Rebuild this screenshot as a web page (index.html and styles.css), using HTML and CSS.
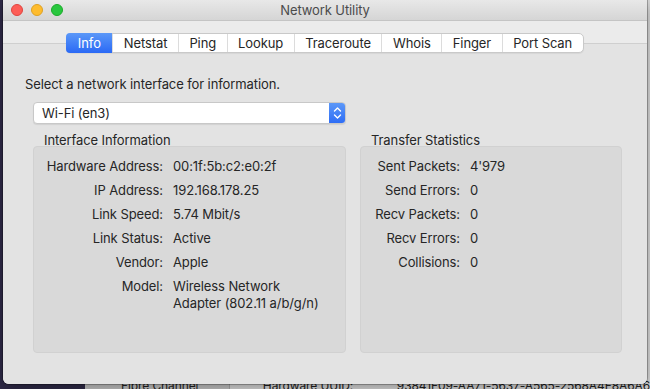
FILE: index.html
```html
<!DOCTYPE html>
<html lang="en">
<head>
	<meta charset="UTF-8">
	<title>Network Utility</title>
	<link rel="stylesheet" href="styles.css">
</head>
<body>
<div class="desk">
	<!-- window behind -->
	<div class="backwin">
		<div class="bw-side"><span>Fibre Channel</span></div>
		<div class="bw-main">
			<span class="bw-key">Hardware UUID:</span>
			<span class="bw-val">93841F09-AA71-5637-A565-2568A4F8A6A6</span>
		</div>
	</div>

	<div class="win">
		<div class="titlebar">
			<div class="lights">
				<span class="light red"></span>
				<span class="light yellow"></span>
				<span class="light green"></span>
			</div>
			<div class="title">Network Utility</div>
		</div>

		<div class="tabstrip">
			<div class="tabs">
				<span class="tab on">Info</span>
				<span class="tab">Netstat</span>
				<span class="tab">Ping</span>
				<span class="tab">Lookup</span>
				<span class="tab">Traceroute</span>
				<span class="tab">Whois</span>
				<span class="tab">Finger</span>
				<span class="tab">Port Scan</span>
			</div>
		</div>

		<div class="tabbox">
			<p class="hint">Select a network interface for information.</p>
			<div class="popup">
				<span class="popup-text">Wi-Fi (en3)</span>
				<span class="stepper">
					<svg width="9" height="14" viewBox="0 0 9 14">
						<path d="M1.5 5 L4.5 2 L7.5 5" fill="none" stroke="#fff" stroke-width="1.4" stroke-linecap="round" stroke-linejoin="round"/>
						<path d="M1.5 9 L4.5 12 L7.5 9" fill="none" stroke="#fff" stroke-width="1.4" stroke-linecap="round" stroke-linejoin="round"/>
					</svg>
				</span>
			</div>

			<div class="groups">
				<section class="group g-info">
					<h2>Interface Information</h2>
					<div class="box">
						<div class="rows rows-info">
							<span class="k">Hardware Address:</span><span class="v">00:1f:5b:c2:e0:2f</span>
							<span class="k">IP Address:</span><span class="v">192.168.178.25</span>
							<span class="k">Link Speed:</span><span class="v">5.74 Mbit/s</span>
							<span class="k">Link Status:</span><span class="v">Active</span>
							<span class="k">Vendor:</span><span class="v">Apple</span>
							<span class="k">Model:</span><span class="v">Wireless Network<br>Adapter (802.11 a/b/g/n)</span>
						</div>
					</div>
				</section>
				<section class="group g-stats">
					<h2>Transfer Statistics</h2>
					<div class="box">
						<div class="rows rows-stats">
							<span class="k">Sent Packets:</span><span class="v">4'979</span>
							<span class="k">Send Errors:</span><span class="v">0</span>
							<span class="k">Recv Packets:</span><span class="v">0</span>
							<span class="k">Recv Errors:</span><span class="v">0</span>
							<span class="k">Collisions:</span><span class="v">0</span>
						</div>
					</div>
				</section>
			</div>
		</div>
	</div>
</div>
</body>
</html>
```

FILE: styles.css
```css
*{margin:0;padding:0;box-sizing:border-box;}
html,body{width:650px;height:389px;overflow:hidden;}
body{font-family:"Inter","Liberation Sans",sans-serif;font-size:13px;letter-spacing:-0.1px;color:#262626;background:#2f2a48;}

.desk{position:relative;width:650px;height:389px;overflow:hidden;}

/* window behind */
.backwin{position:absolute;left:85px;top:0;right:0;bottom:0;display:flex;background:#d9d9d9;}
.bw-side{width:165px;background:#c3c3c3;border-right:1px solid #a9a9a9;padding:378px 0 0 36px;font-size:12px;color:#222;}
.bw-main{flex:1;padding:378px 0 0 33px;font-size:12px;color:#222;display:flex;white-space:nowrap;}
.bw-key{width:134px;}

/* main window */
.win{position:absolute;left:3px;top:0;width:644px;height:384px;background:#e3e3e3;border-radius:0 0 6px 6px;box-shadow:0 0 0 1px rgba(0,0,0,.25),0 4px 14px rgba(0,0,0,.35);overflow:hidden;display:flex;flex-direction:column;}

.titlebar{height:21px;background:linear-gradient(#e8e8e8,#d5d5d5);border-bottom:1px solid #c4c4c4;display:flex;align-items:center;position:relative;}
.lights{display:flex;gap:8px;padding-left:8px;}
.light{width:12px;height:12px;border-radius:50%;}
.red{background:#fd5d56;border:1px solid #e0443e;}
.yellow{background:#febc2e;border:1px solid #dea123;}
.green{background:#29c73f;border:1px solid #1aab29;}
.title{position:absolute;left:0;right:0;text-align:center;color:#4b4b4b;line-height:21px;}

.tabstrip{background:#ebebeb;padding-top:12px;height:23px;border-bottom:1px solid #cfcfcf;display:flex;justify-content:center;}
.tabs{display:flex;height:20px;background:#fff;border:1px solid #c9c9c9;border-radius:5px;box-shadow:0 1px 1px rgba(0,0,0,.06);position:relative;z-index:1;}
.tab{line-height:18px;padding:0 10.5px;color:#262626;border-left:1px solid #dcdcdc;white-space:nowrap;}
.tab:first-child{border-left:none;}
.tab.on{background:linear-gradient(#5b98f8,#2a69f5);color:#fff;border-radius:4px 0 0 4px;margin:-1px 0 -1px -1px;line-height:20px;padding:0 11.5px;}

.tabbox{flex:1;padding:32px 0 0 22px;background:#e3e3e3;}
.hint{line-height:16px;}

.popup{margin:10px 0 0 8px;width:313px;height:22px;background:#fff;border:1px solid #c8c8c8;border-radius:4px;display:flex;align-items:center;box-shadow:0 1px 1px rgba(0,0,0,.08);overflow:hidden;}
.popup-text{flex:1;padding-left:8px;}
.stepper{width:17px;height:22px;margin:-1px -1px -1px 0;background:linear-gradient(#5e9af8,#2c6bf5);border-radius:0 4px 4px 0;display:flex;align-items:center;justify-content:center;}

.groups{display:flex;gap:14px;margin:10px 0 0 8px;}
.group h2{font-size:13px;font-weight:normal;line-height:12px;padding-left:11px;}
.g-info{width:313px;}
.g-stats{width:262px;}
.box{height:207px;background:#d9d9d9;border:1px solid #d1d1d1;border-radius:4px;padding-top:11px;}

.rows{display:grid;row-gap:7px;column-gap:10px;line-height:17px;}
.rows-info{grid-template-columns:129px 1fr;}
.rows-stats{grid-template-columns:99px 1fr;}
.k{text-align:right;white-space:nowrap;}
.v{white-space:nowrap;}
```
